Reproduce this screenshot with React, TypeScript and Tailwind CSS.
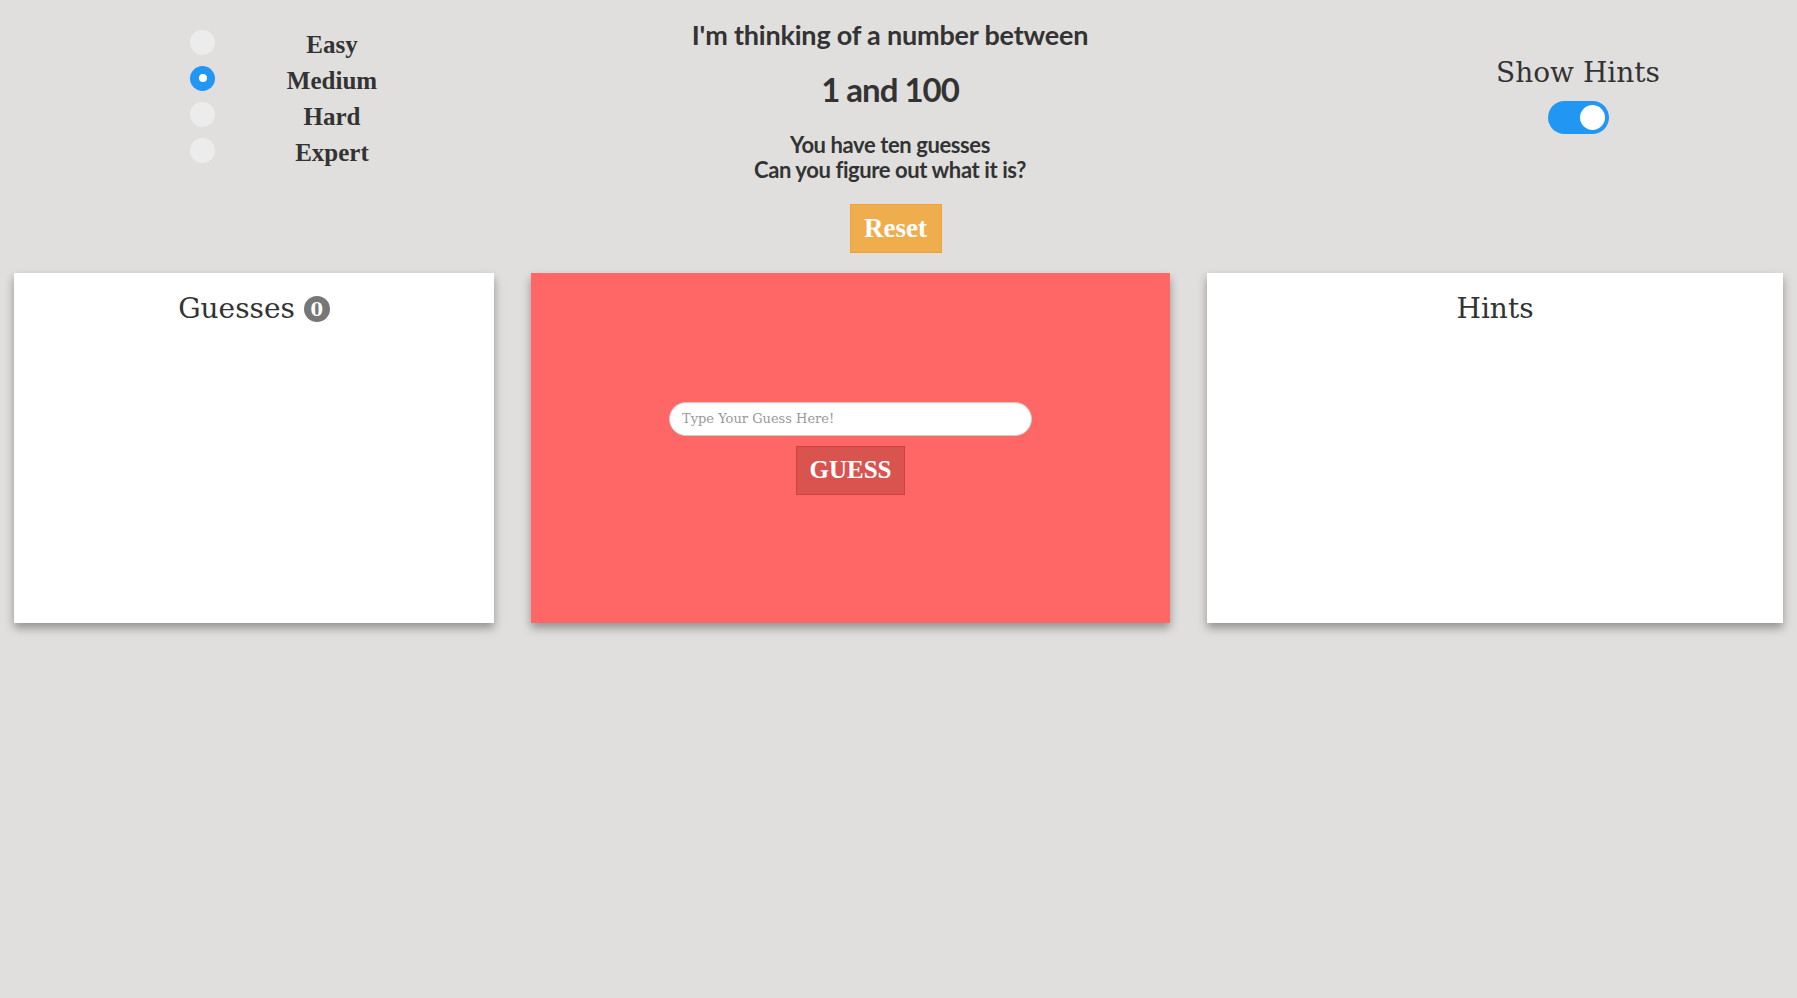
import React from "react";

const serifLabel = { fontFamily: '"Liberation Serif", serif' };

function Radio({ checked }: { checked?: boolean }) {
  return (
    <div
      className={
        "w-[25px] h-[25px] rounded-full flex items-center justify-center " +
        (checked ? "bg-[#2196f3]" : "bg-[#ececec]")
      }
    >
      {checked && <div className="w-[8px] h-[8px] rounded-full bg-white" />}
    </div>
  );
}

export default function App() {
  const levels = [
    { name: "Easy", checked: false },
    { name: "Medium", checked: true },
    { name: "Hard", checked: false },
    { name: "Expert", checked: false },
  ];
  return (
    <div className="min-h-[998px] w-full bg-[#e0dfde] text-[#333]">
      {/* top row */}
      <div className="flex">
        <div className="w-[600px] pt-[24px] pl-[190px]">
          {levels.map((l) => (
            <div key={l.name} className="flex items-center h-[36px]">
              <Radio checked={l.checked} />
              <div
                className="w-[234px] mt-[5px] text-center text-[25px] font-bold leading-[36px] text-[#333]"
                style={serifLabel}
              >
                {l.name}
              </div>
            </div>
          ))}
        </div>
        <div
          className="w-[580px] flex flex-col items-center text-[#333] font-bold"
          style={{ fontFamily: 'Lato, "Liberation Sans", sans-serif' }}
        >
          <div className="mt-[20px] text-[27px] leading-[30px] tracking-[-0.2px]">
            I'm thinking of a number between
          </div>
          <div className="mt-[18px] text-[33px] leading-[42px] tracking-[-1px]">1 and 100</div>
          <div className="mt-[22px] text-[22px] leading-[25px] text-center tracking-[-0.4px]">
            <div>You have ten guesses</div>
            <div>Can you figure out what it is?</div>
          </div>
          <button
            className="mt-[22px] ml-[11px] w-[92px] h-[49px] bg-[#f0ad4e] border border-[#eea236] text-white text-[27px] font-bold"
            style={serifLabel}
          >
            Reset
          </button>
        </div>
        <div className="flex-1">
          <div className="ml-[298px] w-[200px] mt-[56px] flex flex-col items-center">
            <div
              className="text-[28px] leading-[34px] text-[#333]"
              style={{ fontFamily: '"DejaVu Serif", serif' }}
            >
              Show Hints
            </div>
            <div className="mt-[11px] w-[61px] h-[33px] rounded-full bg-[#2196f3] p-[4px] flex justify-end items-center">
              <div className="w-[25px] h-[25px] rounded-full bg-white" />
            </div>
          </div>
        </div>
      </div>

      {/* cards */}
      <div className="flex gap-[37px] px-[14px] mt-[20px]">
        <div className="w-[480px] h-[350px] bg-white shadow-[0_5px_9px_rgba(0,0,0,0.35)] pt-[19px] flex justify-center">
          <div className="flex items-start h-[34px]">
            <span
              className="text-[28px] leading-[34px] text-[#333]"
              style={{ fontFamily: '"DejaVu Serif", serif' }}
            >
              Guesses
            </span>
            <span
              className="ml-[9px] mt-[4px] w-[26px] h-[26px] rounded-full bg-[#777] text-white text-[18px] font-bold flex items-center justify-center"
              style={{ fontFamily: '"DejaVu Serif", serif' }}
            >
              0
            </span>
          </div>
        </div>
        <div className="w-[639px] h-[350px] bg-[#ff6666] shadow-[0_5px_9px_rgba(0,0,0,0.35)] flex flex-col items-center justify-center gap-[10px]">
          <input
            type="text"
            placeholder="Type Your Guess Here!"
            className="w-[363px] h-[34px] rounded-full bg-white border border-[#cccccc] px-[12px] text-[13px] text-[#555] placeholder:text-[#999] outline-none shadow-[inset_0_1px_1px_rgba(0,0,0,0.075)]"
            style={{ fontFamily: '"DejaVu Serif", serif' }}
          />
          <button
            className="w-[109px] h-[49px] bg-[#d9534f] border border-[#d43f3a] text-white text-[25px] font-bold"
            style={serifLabel}
          >
            GUESS
          </button>
        </div>
        <div className="flex-1 h-[350px] bg-white shadow-[0_5px_9px_rgba(0,0,0,0.35)] pt-[19px] flex justify-center">
          <span
            className="text-[28px] leading-[34px] text-[#333]"
            style={{ fontFamily: '"DejaVu Serif", serif' }}
          >
            Hints
          </span>
        </div>
      </div>
    </div>
  );
}
